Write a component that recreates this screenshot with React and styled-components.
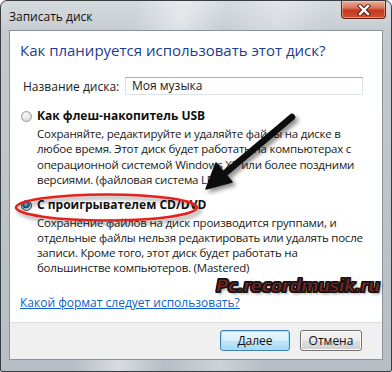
import React from 'react';
import styled, { createGlobalStyle } from 'styled-components';

const GlobalStyle = createGlobalStyle`
  html, body { margin: 0; padding: 0; background: #fff; }
  body { font-family: "Open Sans", "Noto Sans", sans-serif; }
`;

// --- Рамка окна ---
const Window = styled.div`
  position: relative;
  width: 392px;
  height: 372px;
  box-sizing: border-box;
  padding: 0 8px 11px;
  display: flex;
  flex-direction: column;
  border: 1px solid #3a3d40;
  border-radius: 7px 7px 2px 2px;
  background:
    linear-gradient(100deg, rgba(255,255,255,0) 30%, rgba(255,255,255,0.45) 40%, rgba(255,255,255,0) 50%, rgba(255,255,255,0.3) 62%, rgba(255,255,255,0) 72%),
    linear-gradient(180deg, #d6dbe0 0%, #c3c9cf 10%, #b7bec5 100%);
  overflow: hidden;
`;

const TitleBar = styled.div`
  height: 29px;
  display: flex;
  align-items: flex-start;
  flex-shrink: 0;
`;

const Title = styled.span`
  margin-top: 7px;
  font-size: 12px;
  color: #111;
`;

const CloseButton = styled.div`
  margin-left: auto;
  margin-right: -3px;
  width: 45px;
  height: 18px;
  box-sizing: border-box;
  border: 1px solid #5e2318;
  border-top: none;
  border-radius: 0 0 4px 4px;
  background: linear-gradient(180deg, #eeb09c 0%, #d9755c 40%, #c2391f 55%, #d0502f 100%);
  box-shadow: inset 0 0 0 1px rgba(255,220,200,0.45);
  display: flex;
  align-items: center;
  justify-content: center;
`;

// --- Клиентская область ---
const Client = styled.div`
  flex: 1;
  display: flex;
  flex-direction: column;
  border: 1px solid #8a929a;
  background: #fff;
`;

const Body = styled.div`
  flex: 1;
  display: flex;
  flex-direction: column;
  padding: 9px 0 0 10px;
`;

const Heading = styled.h1`
  margin: 0;
  font-size: 15px;
  font-weight: 400;
  color: #1a3d8f;
  line-height: 20px;
`;

const NameRow = styled.div`
  display: flex;
  align-items: center;
  margin-top: 17px;
  padding-left: 3px;
`;

const Label = styled.span`
  width: 102px;
  font-size: 12px;
  color: #1a1a1a;
`;

const NameInput = styled.div`
  width: 238px;
  height: 18px;
  box-sizing: border-box;
  border: 1px solid #dde2e8;
  border-top-color: #abadb3;
  padding-left: 6px;
  font-size: 12px;
  line-height: 16px;
  color: #1a1a1a;
`;

const Option = styled.div`
  margin-top: ${p => p.$gap}px;
  display: flex;
  flex-direction: column;
`;

const OptionHead = styled.div`
  display: flex;
  align-items: center;
  gap: 5px;
  padding-left: 1px;
`;

const Radio = styled.span`
  width: 11px;
  height: 11px;
  border-radius: 50%;
  box-sizing: border-box;
  border: 1px solid ${p => (p.$checked ? '#2d3a44' : '#9a9a9a')};
  background: ${p =>
    p.$checked
      ? 'radial-gradient(circle at 45% 40%, #9fd3f0 0, #3a8fc0 25%, #12456a 45%, #c9ced3 55%, #eef0f2 100%)'
      : 'radial-gradient(circle at 40% 35%, #fbfbfb 0, #e3e3e3 55%, #c9c9c9 100%)'};
`;

const OptionTitle = styled.span`
  font-size: 12px;
  font-weight: 700;
  color: #111;
  line-height: 18px;
`;

const OptionText = styled.p`
  margin: 1px 0 0 17px;
  font-size: 11.5px;
  letter-spacing: -0.22px;
  line-height: ${p => p.$lh}px;
  color: #1a1a1a;
  white-space: pre-line;
`;

const HelpLink = styled.a`
  margin-top: 19px;
  font-size: 12px;
  color: #0b63c8;
  text-decoration: underline;
  align-self: flex-start;
`;

const Footer = styled.div`
  height: 37px;
  flex-shrink: 0;
  box-sizing: border-box;
  background: #f0f0f0;
  border-top: 1px solid #dfdfdf;
  display: flex;
  align-items: center;
  justify-content: flex-end;
  gap: 10px;
  padding: 0 20px 1px 0;
`;

const Button = styled.button`
  width: ${p => p.$w}px;
  height: 21px;
  box-sizing: border-box;
  border-radius: 3px;
  font-family: "Open Sans", "Noto Sans", sans-serif;
  font-size: 12px;
  color: #111;
  padding: 0;
  border: 1px solid ${p => (p.$primary ? '#3c7fb1' : '#707070')};
  background: ${p =>
    p.$primary
      ? 'linear-gradient(180deg, #eaf6fd 0%, #d9f0fc 50%, #bee6fd 51%, #a7d9f5 100%)'
      : 'linear-gradient(180deg, #f2f2f2 0%, #ebebeb 50%, #dddddd 51%, #cfcfcf 100%)'};
  box-shadow: inset 0 0 0 1px ${p => (p.$primary ? '#9fe4ff' : '#fcfcfc')};
`;

// --- Пометки поверх скриншота ---
const Overlay = styled.svg`
  position: absolute;
  left: 0;
  top: 0;
  pointer-events: none;
`;

const Watermark = styled.div`
  position: absolute;
  left: 215px;
  top: 275px;
  font-family: "DejaVu Sans", sans-serif;
  font-size: 17px;
  font-weight: 700;
  font-style: italic;
  letter-spacing: -0.7px;
  color: #7a2622;
  -webkit-text-stroke: 0.8px #111;
  text-shadow:
    1px 0 0 #111, -1px 0 0 #111, 0 1px 0 #111, 0 -1px 0 #111,
    1px 1px 0 #111, -1px -1px 0 #111, 1px -1px 0 #111, -1px 1px 0 #111,
    0 0 3px rgba(255,255,255,0.9), 2px 2px 3px rgba(0,0,0,0.45);
`;

export default function App() {
  return (
    <>
      <GlobalStyle />
      <Window>
        <TitleBar>
          <Title>Записать диск</Title>
          <CloseButton>
            <svg width="14" height="12" viewBox="0 0 14 12">
              <path d="M3 2 L11 10 M11 2 L3 10" stroke="#4a1a12" strokeWidth="4.2" strokeLinecap="square" />
              <path d="M3 2 L11 10 M11 2 L3 10" stroke="#fff" strokeWidth="2.4" strokeLinecap="square" />
            </svg>
          </CloseButton>
        </TitleBar>
        <Client>
          <Body>
            <Heading>Как планируется использовать этот диск?</Heading>
            <NameRow>
              <Label>Название диска:</Label>
              <NameInput>Моя музыка</NameInput>
            </NameRow>
            <Option $gap={12}>
              <OptionHead>
                <Radio />
                <OptionTitle>Как флеш-накопитель USB</OptionTitle>
              </OptionHead>
              <OptionText $lh={15.3}>
                {'Сохраняйте, редактируйте и удаляйте файлы на диске в\nлюбое время. Этот диск будет работать на компьютерах с\nоперационной системой Windows XP или более поздними\nверсиями. (файловая система LFS)'}
              </OptionText>
            </Option>
            <Option $gap={9}>
              <OptionHead>
                <Radio $checked />
                <OptionTitle>С проигрывателем CD/DVD</OptionTitle>
              </OptionHead>
              <OptionText $lh={15}>
                {'Сохранение файлов на диск производится группами, и\nотдельные файлы нельзя редактировать или удалять после\nзаписи. Кроме того, этот диск будет работать на\nбольшинстве компьютеров. (Mastered)'}
              </OptionText>
            </Option>
            <HelpLink href="#">Какой формат следует использовать?</HelpLink>
          </Body>
          <Footer>
            <Button $primary $w={70}>Далее</Button>
            <Button $w={62}>Отмена</Button>
          </Footer>
        </Client>
        <Overlay width="392" height="372" viewBox="0 0 392 372">
          <defs>
            <filter id="sh" x="-20%" y="-20%" width="140%" height="140%">
              <feGaussianBlur in="SourceAlpha" stdDeviation="2" />
              <feOffset dx="3" dy="3" />
              <feComponentTransfer><feFuncA type="linear" slope="0.45" /></feComponentTransfer>
              <feMerge><feMergeNode /><feMergeNode in="SourceGraphic" /></feMerge>
            </filter>
          </defs>
          <ellipse cx="105.5" cy="206.5" rx="90.5" ry="13" fill="none" stroke="#e3241f" strokeWidth="2.6" filter="url(#sh)" />
          <g filter="url(#sh)">
            <line x1="291" y1="116" x2="222" y2="174" stroke="#0c0c0c" strokeWidth="6.5" strokeLinecap="round" />
            <polygon points="205,188 231,181 215,162" fill="#0c0c0c" stroke="#0c0c0c" strokeWidth="1.5" strokeLinejoin="round" />
          </g>
        </Overlay>
        <Watermark>Pc.recordmusik.ru</Watermark>
      </Window>
    </>
  );
}
